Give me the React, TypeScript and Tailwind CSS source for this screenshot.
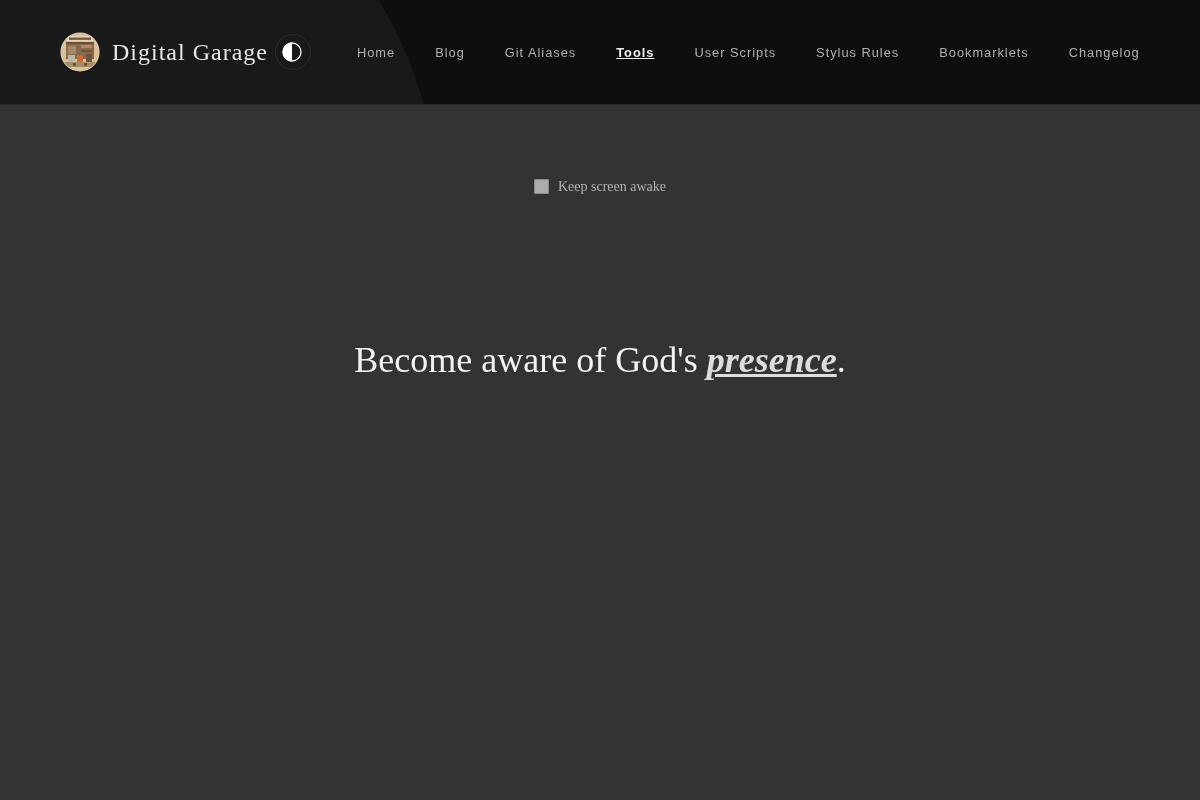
export default function App() {
  const links = ["Home", "Blog", "Git Aliases", "Tools", "User Scripts", "Stylus Rules", "Bookmarklets", "Changelog"];
  return (
    <div className="min-h-[800px] bg-[#333333] font-['Liberation_Serif',serif]">
      <header className="relative h-[105px] overflow-hidden border-b border-[#2b2b2b] bg-[#0e0e0e] px-[60px]">
        <div className="absolute left-[-362px] top-[-190px] h-[800px] w-[800px] rounded-full bg-[#191919]" />
        <div className="relative flex h-[104px] items-center justify-between">
          <div className="flex items-center">
            <svg width="40" height="40" viewBox="0 0 40 40" className="shrink-0">
              <defs><clipPath id="c"><circle cx="20" cy="20" r="18.6" /></clipPath></defs>
              <circle cx="20" cy="20" r="19.6" fill="#cfc6b4" />
              <g clipPath="url(#c)">
                <rect width="40" height="40" fill="#dcc096" />
                <rect x="7" y="4" width="26" height="5" fill="#e6d6b8" />
                <rect x="9" y="5.5" width="22" height="2.4" fill="#7a5a42" />
                <rect x="6" y="10" width="28" height="17" fill="#8a6a4c" />
                <rect x="6" y="10" width="28" height="2" fill="#6a4e39" />
                <rect x="8" y="14" width="8" height="8" fill="#a58a69" />
                <rect x="21" y="13" width="11" height="3" fill="#b08a5c" />
                <rect x="21" y="18" width="11" height="2" fill="#6e523b" />
                <rect x="8" y="23" width="7" height="7" fill="#bdb9a8" />
                <rect x="17" y="23" width="6" height="7" fill="#d0692e" />
                <rect x="26" y="22" width="6" height="8" fill="#6a5442" />
                <rect x="4" y="30" width="32" height="5" fill="#a88f6c" />
                <rect x="13" y="31" width="3" height="3" fill="#6e523b" />
                <rect x="24" y="31" width="3" height="3" fill="#6e523b" />
              </g>
            </svg>
            <span className="ml-3 text-[24px] leading-none tracking-[1px] text-[#e8e8e8] [will-change:transform]">Digital Garage</span>
            <button className="ml-[7px] flex h-9 w-9 items-center justify-center rounded-full border border-[#2b2b2b] bg-[#181818]">
              <svg width="20" height="20" viewBox="0 0 20 20" className="mr-px">
                <circle cx="10" cy="10" r="9" fill="none" stroke="#fff" strokeWidth="1.3" />
                <path d="M10 .5a9.5 9.5 0 0 0 0 19z" fill="#fff" />
              </svg>
            </button>
          </div>
          <nav className="mt-px flex items-center gap-10 font-['Liberation_Sans',sans-serif] text-[12.8px] tracking-[1px] text-[#b0b0b0] [will-change:transform]">
            {links.map((l) => (
              <a key={l} href="#" className={l === "Tools" ? "font-bold text-[#eeeeee] underline" : ""}>{l}</a>
            ))}
          </nav>
        </div>
      </header>
      <main className="flex flex-col items-center [will-change:transform]">
        <label className="mt-[73px] flex items-center text-[14px] leading-[18px] text-[#b3b3b3]">
          <span className="mb-[2px] h-[15px] w-[15px] rounded-[1px] border border-[#8a8a8a] bg-[#acacac]" />
          <span className="ml-[9px]">Keep screen awake</span>
        </label>
        <h1 className="mt-[141px] text-center text-[36px] font-normal leading-[46px] text-[#f2f2f2]">
          Become aware of God's <strong className="font-bold italic text-[#dddddd] underline">presence</strong>.
        </h1>
      </main>
    </div>
  );
}
